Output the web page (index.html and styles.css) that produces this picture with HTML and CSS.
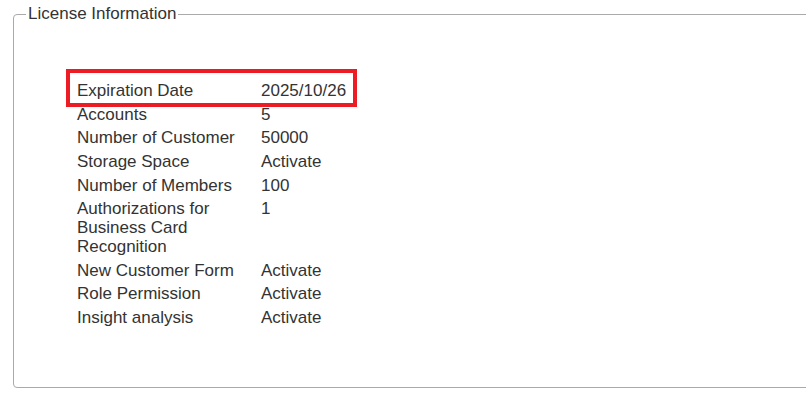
FILE: index.html
```html
<!DOCTYPE html>
<html lang="en">
<head>
    <meta charset="UTF-8">
    <title>License Information</title>
    <link rel="stylesheet" href="styles.css">
</head>
<body>
<div class="page">
    <fieldset class="license">
        <legend>License Information</legend>
        <div class="license-body">
            <table class="info">
                <tr>
                    <td class="label">Expiration Date</td>
                    <td>2025/10/26</td>
                </tr>
                <tr>
                    <td class="label">Accounts</td>
                    <td>5</td>
                </tr>
                <tr>
                    <td class="label">Number of Customer</td>
                    <td>50000</td>
                </tr>
                <tr>
                    <td class="label">Storage Space</td>
                    <td>Activate</td>
                </tr>
                <tr>
                    <td class="label">Number of Members</td>
                    <td>100</td>
                </tr>
                <tr>
                    <td class="label">Authorizations for Business Card Recognition</td>
                    <td>1</td>
                </tr>
                <tr>
                    <td class="label">New Customer Form</td>
                    <td>Activate</td>
                </tr>
                <tr>
                    <td class="label">Role Permission</td>
                    <td>Activate</td>
                </tr>
                <tr>
                    <td class="label">Insight analysis</td>
                    <td>Activate</td>
                </tr>
            </table>
        </div>
    </fieldset>
    <!--標註框-->
    <div class="highlight"></div>
</div>
</body>
</html>
```

FILE: styles.css
```css
* {
    padding: 0;
    margin: 0;
    box-sizing: border-box;
}

html, body {
    overflow: hidden;
    background: #fff;
}

body {
    font-family: "Liberation Sans", Arial, sans-serif;
    font-size: 17px;
    color: #333;
}

.page {
    position: relative;
    width: 806px;
    height: 402px;
    padding: 4px 0 0 13px;
}

.license {
    width: 800px;
    height: 384px;
    border: 1px solid #aaa;
    border-radius: 4px;
    padding: 0 12px;
}

.license legend {
    padding: 0 2px;
    color: #333;
}

.license-body {
    padding: 54px 0 0 48px;
}

.info {
    border-spacing: 2px;
    line-height: 19px;
}

.info td {
    padding: 1.3px 1px;
    vertical-align: top;
}

.info td.label {
    width: 182px;
}

.highlight {
    position: absolute;
    left: 66px;
    top: 69px;
    width: 291px;
    height: 38px;
    border: 4px solid #ed1c24;
}
```
